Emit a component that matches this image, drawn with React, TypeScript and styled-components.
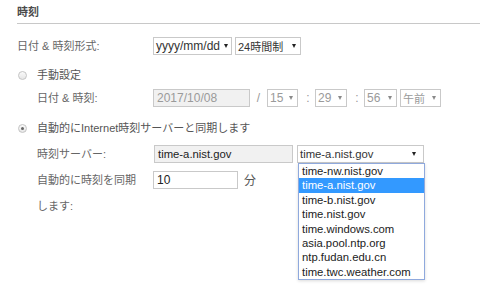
import React from "react";
import styled, { createGlobalStyle } from "styled-components";

const GlobalStyle = createGlobalStyle`
  html, body {
    margin: 0;
    padding: 0;
    background: #ffffff;
  }
  body {
    font-family: "Liberation Sans", Arial, "Noto Sans CJK JP", sans-serif;
    font-size: 11px;
    color: #555;
  }
`;

const servers = [
  "time-nw.nist.gov",
  "time-a.nist.gov",
  "time-b.nist.gov",
  "time.nist.gov",
  "time.windows.com",
  "asia.pool.ntp.org",
  "ntp.fudan.edu.cn",
  "time.twc.weather.com",
];

const Page = styled.div`
  width: 480px;
  height: 296px;
  overflow: hidden;
  padding-left: 17px;
  box-sizing: border-box;
`;

const Title = styled.div`
  padding-top: 4px;
  height: 16px;
  line-height: 16px;
  font-size: 11px;
  font-weight: bold;
  color: #4a4a4a;
`;

const Divider = styled.div`
  margin-top: 3px;
  border-top: 1px solid #c8c8c8;
`;

const Row = styled.div<{ $indent?: number; $top: number; $start?: boolean }>`
  display: flex;
  align-items: ${({ $start }) => ($start ? "flex-start" : "center")};
  margin-top: ${({ $top }) => $top}px;
  padding-left: ${({ $indent = 0 }) => $indent}px;
  min-height: 18px;
`;

const Label = styled.div<{ $width: number; $tall?: boolean }>`
  width: ${({ $width }) => $width}px;
  flex: none;
  color: #666;
  line-height: ${({ $tall }) => ($tall ? "26px" : "18px")};
  margin-top: ${({ $tall }) => ($tall ? "-4px" : "0")};
  padding-right: 12px;
  box-sizing: border-box;
`;

const RadioLabel = styled.label`
  display: flex;
  align-items: center;
  color: #555;
  line-height: 18px;
`;

const RadioDot = styled.span<{ $checked?: boolean }>`
  width: 9px;
  height: 9px;
  margin: 0 10px 0 1px;
  border-radius: 50%;
  border: 1px solid #c4c4c4;
  background: linear-gradient(#fafafa, #e6e6e6);
  box-sizing: border-box;
  display: flex;
  align-items: center;
  justify-content: center;

  &::after {
    content: "";
    width: 3px;
    height: 3px;
    border-radius: 50%;
    background: ${({ $checked }) => ($checked ? "#666" : "transparent")};
  }
`;

const SelectBox = styled.div<{ $width: number; $disabled?: boolean; $size?: number; $gapLeft?: number }>`
  position: relative;
  width: ${({ $width }) => $width}px;
  height: 18px;
  margin-right: 3px;
  margin-left: ${({ $gapLeft = 0 }) => $gapLeft}px;
  padding: 0 4px 0 2px;
  box-sizing: border-box;
  border: 1px solid #c9c9c9;
  background: #fff;
  display: flex;
  align-items: center;
  justify-content: space-between;
  font-size: ${({ $size = 12 }) => $size}px;
  color: ${({ $disabled }) => ($disabled ? "#9a9a9a" : "#333")};
  flex: none;
`;

const Arrow = styled.span<{ $disabled?: boolean }>`
  width: 0;
  height: 0;
  margin-left: 4px;
  border-left: 2.5px solid transparent;
  border-right: 2.5px solid transparent;
  border-top: 4px solid ${({ $disabled }) => ($disabled ? "#8a8a8a" : "#222")};
`;

const TextBox = styled.div<{ $width: number; $gray?: boolean; $muted?: boolean; $size?: number }>`
  width: ${({ $width }) => $width}px;
  height: 18px;
  padding: 0 3px;
  box-sizing: border-box;
  border: 1px solid #c9c9c9;
  background: ${({ $gray }) => ($gray ? "#f1f1f1" : "#fff")};
  color: ${({ $muted }) => ($muted ? "#9a9a9a" : "#222")};
  font-size: ${({ $size = 12 }) => $size}px;
  display: flex;
  align-items: center;
  flex: none;
`;

const Sep = styled.span<{ $w: number }>`
  width: ${({ $w }) => $w}px;
  flex: none;
  text-align: center;
  color: #999;
  font-size: 12px;
`;

const Unit = styled.span`
  margin-left: 6px;
  color: #555;
  font-size: 12px;
`;

const DropList = styled.ul`
  position: absolute;
  top: 17px;
  left: 0;
  width: 127px;
  margin: 0;
  padding: 0;
  list-style: none;
  background: #fff;
  border: 1px solid #8fa9dd;
  box-sizing: border-box;
  box-shadow: 0 1px 3px rgba(0, 0, 0, 0.15);
  z-index: 2;
`;

const DropItem = styled.li<{ $active?: boolean }>`
  height: 14.4px;
  line-height: 14.4px;
  padding-left: 3px;
  font-size: 11.3px;
  color: ${({ $active }) => ($active ? "#fff" : "#222")};
  background: ${({ $active }) => ($active ? "#3399ff" : "transparent")};
  white-space: nowrap;
`;

const Select: React.FC<{ width: number; value: string; disabled?: boolean; size?: number }> = ({
  width,
  value,
  disabled,
  size,
}) => (
  <SelectBox $width={width} $disabled={disabled} $size={size}>
    <span>{value}</span>
    <Arrow $disabled={disabled} />
  </SelectBox>
);

export default function App() {
  return (
    <>
      <GlobalStyle />
      <Page>
        <Title>時刻</Title>
        <Divider />

        <Row $top={13}>
          <Label $width={136}>日付 &amp; 時刻形式:</Label>
          <Select width={79} value="yyyy/mm/dd" />
          <Select width={66} value="24時間制" size={11} />
        </Row>

        <Row $top={11}>
          <RadioLabel>
            <RadioDot />
            手動設定
          </RadioLabel>
        </Row>

        <Row $top={5} $indent={20}>
          <Label $width={116}>日付 &amp; 時刻:</Label>
          <TextBox $width={97} $gray $muted>
            2017/10/08
          </TextBox>
          <Sep $w={17}>/</Sep>
          <Select width={31} value="15" disabled />
          <Sep $w={14}>:</Sep>
          <Select width={32} value="29" disabled />
          <Sep $w={14}>:</Sep>
          <Select width={33} value="56" disabled />
          <Select width={41} value="午前" disabled size={11} />
        </Row>

        <Row $top={12}>
          <RadioLabel>
            <RadioDot $checked />
            自動的にInternet時刻サーバーと同期します
          </RadioLabel>
        </Row>

        <Row $top={8} $indent={20}>
          <Label $width={117}>時刻サーバー:</Label>
          <TextBox $width={139} $gray $size={11.3}>
            time-a.nist.gov
          </TextBox>
          <SelectBox $width={127} $size={11.3} $gapLeft={4}>
            <span>time-a.nist.gov</span>
            <Arrow style={{ marginRight: 3 }} />
            <DropList>
              {servers.map((s) => (
                <DropItem key={s} $active={s === "time-a.nist.gov"}>
                  {s}
                </DropItem>
              ))}
            </DropList>
          </SelectBox>
        </Row>

        <Row $top={8} $indent={20} $start>
          <Label $width={116} $tall>
            自動的に時刻を同期します:
          </Label>
          <TextBox $width={85} $size={12}>
            10
          </TextBox>
          <Unit>分</Unit>
        </Row>
      </Page>
    </>
  );
}
